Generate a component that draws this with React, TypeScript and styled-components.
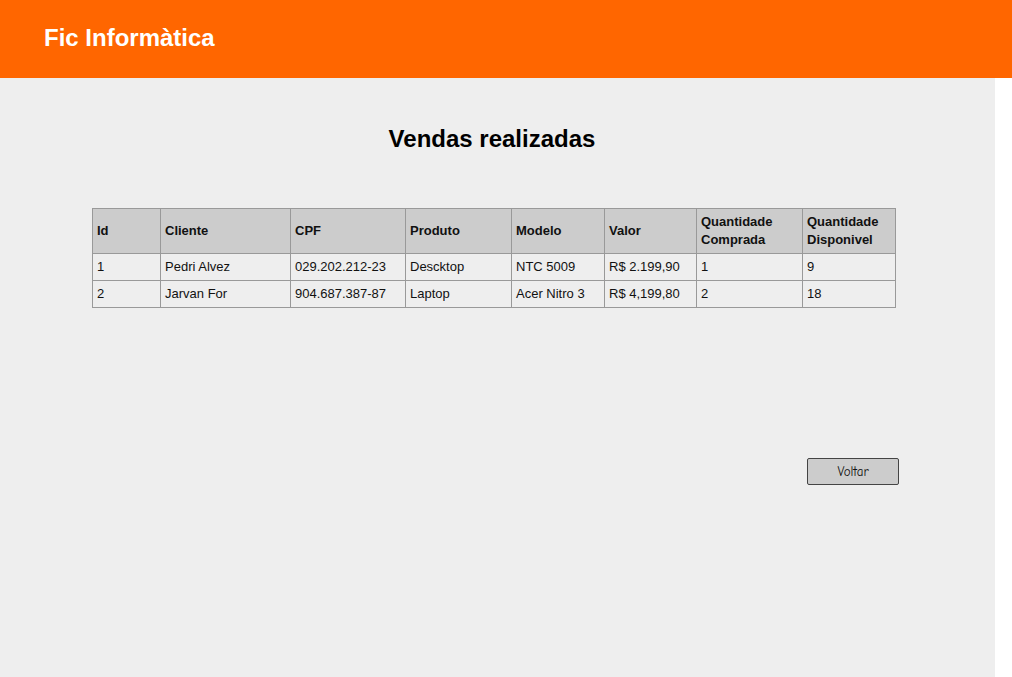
import React from "react";
import styled, { createGlobalStyle } from "styled-components";

const Global = createGlobalStyle`
  html, body { margin: 0; padding: 0; background: #ffffff; }
  body { font-family: "Liberation Sans", Arial, sans-serif; }
`;

const Header = styled.header`
  height: 78px;
  background: #ff6600;
  display: flex;
  align-items: center;
  padding-left: 44px;
  box-sizing: border-box;
`;

const Brand = styled.h1`
  margin: 0;
  color: #ffffff;
  font-size: 24px;
  font-weight: bold;
  font-family: "Liberation Sans", Arial, sans-serif;
  padding-bottom: 2px;
`;

const Main = styled.main`
  width: 995px;
  min-height: 599px;
  background: #eeeeee;
  box-sizing: border-box;
  padding-top: 47px;
  display: flex;
  flex-direction: column;
`;

const Title = styled.h2`
  margin: 0 0 0 -11px;
  text-align: center;
  font-size: 24px;
  font-weight: bold;
  color: #000;
  line-height: 28px;
`;

const Table = styled.table`
  margin: 55px 0 0 92px;
  border-collapse: collapse;
  font-size: 13px;
  color: #111;
  table-layout: fixed;
  width: 803px;
`;

const Th = styled.th`
  background: #cccccc;
  border: 1px solid #999999;
  text-align: left;
  padding: 0 4px;
  height: 44px;
  font-weight: bold;
  line-height: 18px;
  vertical-align: middle;
`;

const Td = styled.td`
  border: 1px solid #999999;
  padding: 0 4px;
  height: 26px;
  line-height: 16px;
`;

const Actions = styled.div`
  display: flex;
  justify-content: flex-end;
  padding-right: 96px;
  margin-top: 150px;
`;

const Button = styled.button`
  width: 92px;
  height: 27px;
  background: #cccccc;
  border: 1px solid #444444;
  border-radius: 2px;
  font-family: "Comic Sans MS", "Comic Neue", cursive;
  font-size: 13px;
  color: #111;
  cursor: pointer;
  padding: 0;
`;

const cols = [68, 130, 115, 106, 93, 92, 106, 93];
const heads = ["Id", "Cliente", "CPF", "Produto", "Modelo", "Valor", "Quantidade Comprada", "Quantidade Disponivel"];
const rows = [
  ["1", "Pedri Alvez", "029.202.212-23", "Descktop", "NTC 5009", "R$ 2.199,90", "1", "9"],
  ["2", "Jarvan For", "904.687.387-87", "Laptop", "Acer Nitro 3", "R$ 4,199,80", "2", "18"],
];

export default function App() {
  return (
    <>
      <Global />
      <Header>
        <Brand>Fic Informàtica</Brand>
      </Header>
      <Main>
        <Title>Vendas realizadas</Title>
        <Table>
          <colgroup>
            {cols.map((w, i) => (
              <col key={i} style={{ width: w }} />
            ))}
          </colgroup>
          <thead>
            <tr>
              {heads.map((h) => (
                <Th key={h}>{h}</Th>
              ))}
            </tr>
          </thead>
          <tbody>
            {rows.map((r) => (
              <tr key={r[0]}>
                {r.map((c, i) => (
                  <Td key={i}>{c}</Td>
                ))}
              </tr>
            ))}
          </tbody>
        </Table>
        <Actions>
          <Button>Voltar</Button>
        </Actions>
      </Main>
    </>
  );
}
